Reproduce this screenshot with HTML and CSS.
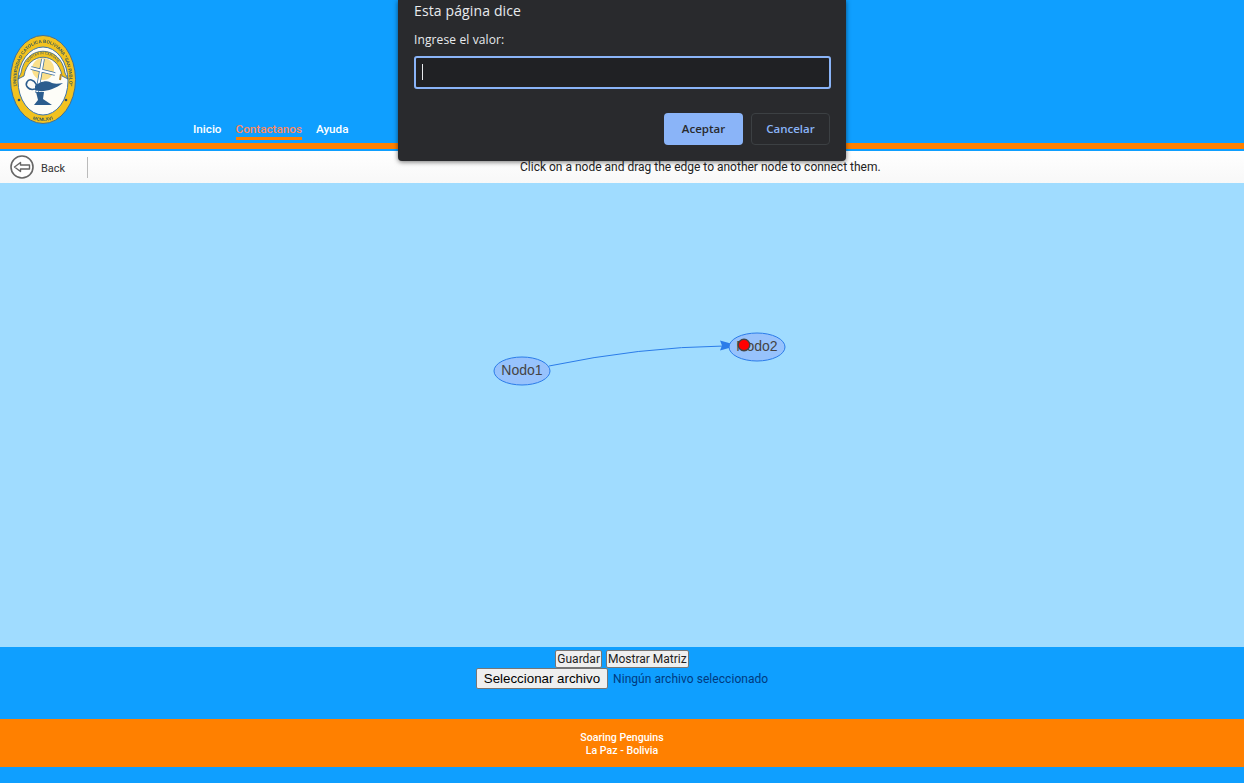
FILE: index.html
```html
<!DOCTYPE html>
<html lang="es">
<head>
    <meta charset="UTF-8">
    <title>Grafos</title>
    <link rel="stylesheet" href="styles.css">
</head>
<body>

    <header class="header">
        <svg class="logo" width="66" height="90" viewBox="0 0 66 90">
            <defs>
                <path id="ringTop" d="M8.5 59 A26.5 37 0 1 1 57.5 59"/>
                <path id="ribbon" d="M14 38 C19 13 47 13 52 38"/>
                <path id="ringBottom" d="M18 82 Q33 90 48 82"/>
            </defs>
            <ellipse cx="33" cy="44.5" rx="32.5" ry="44" fill="#f2c21f" stroke="#46708f" stroke-width="1"/>
            <ellipse cx="33" cy="46" rx="25" ry="34" fill="#fdfdf8" stroke="#3f74a8" stroke-width="1"/>
            <text class="logo-ring"><textPath href="#ringTop" startOffset="50%" text-anchor="middle">UNIVERSIDAD CATOLICA BOLIVIANA "SAN PABLO"</textPath></text>
            <text class="logo-ring"><textPath href="#ringBottom" startOffset="50%" text-anchor="middle">MCMLXVI</textPath></text>
            <circle cx="9" cy="65" r="1.3" fill="#27496b"/>
            <circle cx="56" cy="65" r="1.3" fill="#27496b"/>
            <circle cx="33" cy="34" r="11" fill="#fbe08a"/>
            <path d="M11 38 C15 9 51 9 55 38 L58 44 L52 41 C48 16 18 16 14 41 L8 44 Z" fill="#f2c21f" stroke="#2f5f8c" stroke-width="0.8"/>
            <text class="logo-ribbon"><textPath href="#ribbon" startOffset="50%" text-anchor="middle">VERITAS IN CARITATE</textPath></text>
            <path d="M33 24 L27 58 M21 33 L45 39" stroke="#3c6f9f" stroke-width="3.6" fill="none"/>
            <path d="M33 24 L27 58 M21 33 L45 39" stroke="#fff" stroke-width="2" fill="none"/>
            <path d="M25 55 C32 58 44 55 53 48 C47 49 43 49 40 47 C35 45 28 48 25 51 Z" fill="#2b5d8e"/>
            <path d="M25 54 C18 56 15 50 17 47 C19 43 24 45 26 49 L28 55" fill="none" stroke="#2b5d8e" stroke-width="1.6"/>
            <path d="M26 57 L34 57 L33 64 L42 70 L24 70 L28 65 Z" fill="#2b5d8e"/>
            <path d="M50 45 L51 39" stroke="#b98a22" stroke-width="2"/>
        </svg>
        <nav class="menu">
            <a class="menu-item">Inicio</a>
            <a class="menu-item active">Contactanos</a>
            <a class="menu-item">Ayuda</a>
        </nav>
    </header>
    <div class="header-line"></div>

    <div class="toolbar">
        <a class="back">
            <svg width="24" height="24" viewBox="0 0 24 24">
                <circle cx="12" cy="12" r="11" fill="#fff" stroke="#666" stroke-width="1.6"/>
                <path d="M4.5 12 L10.5 7.5 V10 H19.5 V14 H10.5 V16.5 Z" fill="#fff" stroke="#666" stroke-width="1.4" stroke-linejoin="round"/>
            </svg>
            <span>Back</span>
        </a>
        <p class="hint">Click on a node and drag the edge to another node to connect them.</p>
    </div>

    <main class="canvas">
        <svg class="graph" width="1244" height="464" viewBox="0 183 1244 464">
            <path d="M549 366 Q640 347 724 346" fill="none" stroke="#2b7ce9" stroke-width="1"/>
            <path d="M738 345.5 L720 340.5 L722 345.5 L720 350.5 Z" fill="#2b7ce9"/>
            <ellipse class="node" cx="522" cy="371" rx="28" ry="14"/>
            <text class="node-label" x="522" y="375">Nodo1</text>
            <ellipse class="node" cx="757" cy="347" rx="28" ry="14"/>
            <text class="node-label" x="757" y="351">Nodo2</text>
            <circle cx="744" cy="345" r="5.8" fill="#f00" stroke="#444" stroke-width="1.4"/>
        </svg>
    </main>

    <section class="controls">
        <div class="controls-row">
            <button class="btn">Guardar</button>
            <button class="btn">Mostrar Matriz</button>
        </div>
        <div class="controls-row file-row">
            <button class="btn-file">Seleccionar archivo</button>
            <span class="file-name">Ningún archivo seleccionado</span>
        </div>
    </section>

    <footer class="footer">
        <div>Soaring Penguins</div>
        <div>La Paz - Bolivia</div>
    </footer>

    <div class="dialog">
        <div class="dialog-title">Esta página dice</div>
        <div class="dialog-label">Ingrese el valor:</div>
        <div class="dialog-input"><span class="caret"></span></div>
        <div class="dialog-buttons">
            <button class="dialog-ok">Aceptar</button>
            <button class="dialog-cancel">Cancelar</button>
        </div>
    </div>

</body>
</html>
```

FILE: styles.css
```css
body {
    font-family: Roboto, "Noto Sans", sans-serif;
    background-color: #0f9fff;
    margin: 0;
    height: 783px;
    overflow: hidden;
    position: relative;
}
.header {
    height: 143px;
    display: flex;
    align-items: flex-start;
    box-sizing: border-box;
    padding: 35px 0 0 10px;
}
.logo {
    flex: none;
    filter: blur(0.3px);
}
.logo-ring {
    font-family: "Liberation Sans", sans-serif;
    font-size: 4.5px;
    font-weight: bold;
    fill: #3a5a58;
}
.logo-ribbon {
    font-family: "Liberation Sans", sans-serif;
    font-size: 3.4px;
    fill: #33505a;
}
.menu {
    display: flex;
    gap: 14px;
    margin: 86px 0 0 117px;
}
.menu-item {
    color: #fff;
    font-size: 11.7px;
    font-weight: 500;
    line-height: 16px;
    height: 18px;
    white-space: nowrap;
}
.menu-item.active {
    color: #ff8a5c;
    border-bottom: 3px solid #ff8000;
    box-sizing: border-box;
    height: 19px;
}
.header-line {
    height: 6px;
    background-color: #ff8000;
    border-bottom: 2px solid #0f9fff;
}
.toolbar {
    height: 32px;
    display: flex;
    align-items: center;
    background: linear-gradient(#fff, #f8f8f8);
    position: relative;
}
.back {
    display: flex;
    align-items: center;
    gap: 7px;
    width: 77px;
    height: 21px;
    padding-left: 10px;
    border-right: 1px solid #bbb;
    color: #333;
    font-size: 11px;
}
.back span {
    padding-top: 3px;
}
.hint {
    margin: 0 0 0 432px;
    font-size: 12px;
    color: #222;
    white-space: nowrap;
}
.canvas {
    height: 464px;
    background-color: #a0dcff;
}
.graph {
    display: block;
}
.node {
    fill: #97c2fc;
    stroke: #2b7ce9;
    stroke-width: 1;
}
.node-label {
    font-family: "Liberation Sans", Arial, sans-serif;
    font-size: 14px;
    fill: #444;
    text-anchor: middle;
}
.controls {
    height: 72px;
    box-sizing: border-box;
    padding-top: 3px;
}
.controls-row {
    display: flex;
    justify-content: center;
    gap: 4px;
    height: 18px;
}
.btn {
    font-family: inherit;
    font-size: 12px;
    color: #222;
    padding: 0 1px;
    height: 18px;
    background: #efefef;
    border: 1px solid #767676;
    border-radius: 2px;
}
.file-row {
    height: 21px;
    gap: 5px;
    align-items: center;
}
.btn-file {
    font-family: "Liberation Sans", Arial, sans-serif;
    font-size: 13.33px;
    color: #000;
    height: 21px;
    padding: 0 7px;
    background: #efefef;
    border: 1px solid #767676;
    border-radius: 2px;
}
.file-name {
    font-size: 12px;
    letter-spacing: 0.05px;
    color: #003a80;
}
.footer {
    height: 48px;
    box-sizing: border-box;
    padding-top: 12px;
    background-color: #ff8000;
    color: #fff;
    font-size: 10.6px;
    font-weight: 500;
    line-height: 13px;
    text-align: center;
}
.dialog {
    position: absolute;
    left: 398px;
    top: 0;
    width: 448px;
    height: 161px;
    box-sizing: border-box;
    padding: 2px 16px 0;
    background-color: #292a2d;
    border-radius: 0 0 4px 4px;
    box-shadow: 0 1px 5px rgba(0, 0, 0, 0.55);
    font-family: "Open Sans", "Noto Sans", sans-serif;
    color: #e8eaed;
}
.dialog-title {
    font-size: 14px;
    letter-spacing: 0.13px;
    line-height: 18px;
}
.dialog-label {
    font-size: 12px;
    letter-spacing: 0.12px;
    line-height: 16px;
    margin-top: 12px;
}
.dialog-input {
    height: 33px;
    width: 417px;
    box-sizing: border-box;
    margin-top: 8px;
    background-color: #202124;
    border: 2px solid #8ab4f8;
    border-radius: 3px;
    padding: 6px 0 0 6px;
}
.caret {
    display: block;
    width: 1px;
    height: 16px;
    background-color: #e8eaed;
}
.dialog-buttons {
    display: flex;
    justify-content: flex-end;
    gap: 8px;
    margin-top: 24px;
    width: 416px;
}
.dialog-ok,
.dialog-cancel {
    font-family: inherit;
    font-size: 11.5px;
    font-weight: 600;
    width: 79px;
    height: 32px;
    padding-bottom: 3px;
    border-radius: 4px;
}
.dialog-ok {
    background-color: #8ab4f8;
    border: none;
    color: #292a2d;
}
.dialog-cancel {
    background-color: #292a2d;
    border: 1px solid #3c4043;
    color: #8ab4f8;
}
```
